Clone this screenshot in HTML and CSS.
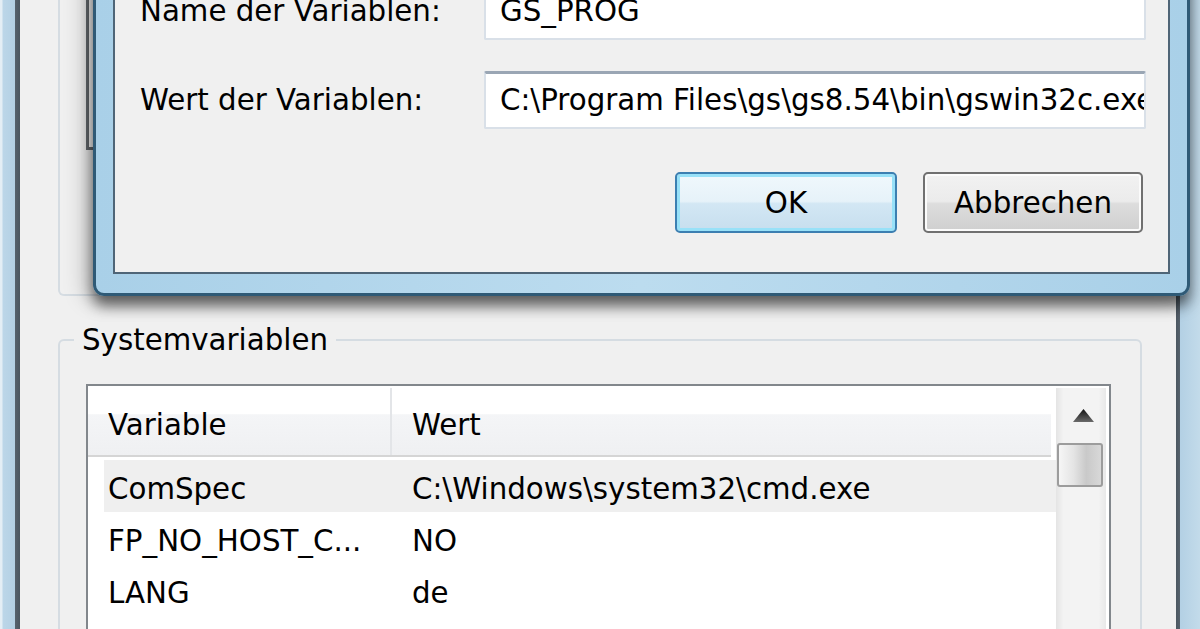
FILE: index.html
```html
<!DOCTYPE html>
<html lang="de">
<head>
<meta charset="utf-8">
<title>Umgebungsvariablen</title>
<link rel="stylesheet" href="styles.css">
</head>
<body>
<div class="parent">
  <div class="frame-left"></div>
  <div class="client">
    <div class="user-group">
      <div class="user-list"></div>
    </div>
    <fieldset class="sys-group">
      <legend>Systemvariablen</legend>
      <div class="listview">
        <div class="lv-main">
          <div class="lv-header">
            <div class="col col-name">Variable</div>
            <div class="col col-value">Wert</div>
          </div>
          <div class="lv-rows">
            <div class="row selected"><div class="cell c1">ComSpec</div><div class="cell c2">C:\Windows\system32\cmd.exe</div></div>
            <div class="row"><div class="cell c1">FP_NO_HOST_C...</div><div class="cell c2">NO</div></div>
            <div class="row"><div class="cell c1">LANG</div><div class="cell c2">de</div></div>
          </div>
        </div>
        <div class="scrollbar">
          <div class="sb-up">
            <svg width="21" height="13" viewBox="0 0 21 13"><defs><linearGradient id="ag" x1="0" y1="0" x2="0" y2="1"><stop offset="0" stop-color="#111"/><stop offset="1" stop-color="#6a6a6a"/></linearGradient></defs><polygon points="10.5,0 21,13 0,13" fill="url(#ag)"/></svg>
          </div>
          <div class="sb-thumb"></div>
        </div>
      </div>
    </fieldset>
  </div>
  <div class="frame-right"></div>
</div>

<div class="dialog">
  <div class="dlg-client">
    <div class="field-row">
      <label class="field-label">Name der Variablen:</label>
      <div class="textbox">GS_PROG</div>
    </div>
    <div class="field-row value-row">
      <label class="field-label">Wert der Variablen:</label>
      <div class="textbox">C:\Program Files\gs\gs8.54\bin\gswin32c.exe</div>
    </div>
    <div class="buttons">
      <button class="btn btn-default">OK</button>
      <button class="btn">Abbrechen</button>
    </div>
  </div>
</div>
</body>
</html>
```

FILE: styles.css
```css
* { box-sizing: border-box; }
html, body { margin: 0; padding: 0; }
body {
  width: 1200px;
  height: 629px;
  overflow: hidden;
  position: relative;
  background: #f0f0f0;
  font-family: "DejaVu Sans", sans-serif;
  font-size: 29.3px;
  color: #000;
}

/* parent window */
.parent { display: flex; height: 629px; overflow: hidden; }
.frame-left {
  width: 20px; flex: none;
  background: linear-gradient(to right, #e4eef5 0, #e4eef5 2px, #bcd6e8 3px, #b3d0e4 15px, #56626d 15px, #4b5761 20px);
}
.frame-right {
  width: 24px; flex: none;
  background: linear-gradient(to right, #4b5761 0, #56626d 4px, #b3d0e4 4px, #c3dbea 24px);
}
.client {
  flex: 1;
  display: flex;
  flex-direction: column;
  padding: 0 34px 0 38px;
  overflow: hidden;
}
.user-group {
  height: 296px; flex: none;
  border: 2px solid #d5dce2;
  border-top: none;
  border-radius: 0 0 6px 6px;
  padding-left: 26px;
}
.user-list {
  width: 200px; height: 150px;
  border-left: 3px solid #666b70;
  border-bottom: 3px solid #666b70;
  background: #fff;
}

.sys-group {
  flex: none;
  height: 420px;
  margin: 27px 0 0 0;
  padding: 0;
  border: 2px solid #d5dce2;
  border-radius: 6px;
  min-width: 0;
}
.sys-group legend {
  margin-left: 14px;
  padding: 0 8px;
  line-height: 34px;
}

.listview {
  display: flex;
  margin: 27px 29px 0 26px;
  height: 340px;
  border: 2px solid #82878c;
  background: #fff;
}
.lv-main { flex: 1; min-width: 0; padding-top: 2px; }
.lv-header {
  display: flex;
  height: 69px;
  margin-right: 5px;
  border-bottom: 2px solid #d5d5d5;
  background: linear-gradient(#fff 0, #fff 38%, #f4f5f7 40%, #eff0f2 100%);
}
.col { padding-top: 9px; line-height: 57px; white-space: nowrap; }
.col-name { width: 304px; padding-left: 20px; border-right: 2px solid #e3e5e8; }
.col-value { padding-left: 20px; }

.lv-rows { padding: 3px 0 0 16px; }
.row {
  display: flex;
  height: 52px;
  padding-top: 7px;
  line-height: 45px;
  white-space: nowrap;
}
.row.selected { background: #efefef; }
.c1 { width: 288px; padding-left: 4px; flex: none; }
.c2 { padding-left: 20px; }

.scrollbar {
  width: 50px; flex: none;
  margin: 2px 3px 0 0;
  background: linear-gradient(to right, #e4e4e4, #f3f3f3 15%, #f3f3f3 85%, #e8e8e8);
}
.sb-up {
  height: 55px;
  display: flex;
  justify-content: center;
  padding: 21px 0 0 4px;
}
.sb-up svg { display: block; }
.sb-thumb {
  margin-left: 1px;
  width: 46px; height: 44px;
  border: 2px solid #9c9c9c;
  border-radius: 3px;
  background: linear-gradient(to right, #f6f6f6, #e4e4e4 35%, #c9c9c9 65%, #d8d8d8);
}

/* dialog window */
.dialog {
  position: absolute;
  left: 93px; top: -100px;
  width: 1097px; height: 396px;
  padding: 17px 17px 19px 17px;
  border: 3px solid #2f5a76;
  border-radius: 0 0 11px 11px;
  background: linear-gradient(to right, #a9d0e8, #bcdcef 50%, #a9d0e8);
  box-shadow: 0 10px 14px rgba(0,0,0,.55), -8px 4px 22px rgba(0,0,0,.22);
}
.dlg-client {
  height: 100%;
  border: 2px solid #4f6577;
  background: #f0f0f0;
  display: flex;
  flex-direction: column;
  justify-content: flex-end;
  padding: 0 22px 39px 25px;
}
.field-row { display: flex; align-items: center; height: 58px; flex: none; }
.value-row { margin-top: 31px; }
.field-label { width: 344px; flex: none; white-space: nowrap; }
.textbox {
  flex: 1; min-width: 0;
  height: 58px;
  line-height: 53px;
  padding-left: 14px;
  background: #fff;
  border: 2px solid #d9e0e8;
  border-top: 3px solid #9aa6b4;
  border-radius: 2px;
  white-space: nowrap;
  overflow: hidden;
}
.buttons {
  display: flex;
  justify-content: flex-end;
  gap: 26px;
  margin-top: 43px;
  padding-right: 3px;
  flex: none;
}
.btn {
  font: inherit;
  color: #000;
  width: 220px; height: 61px;
  padding: 0;
  border: 2px solid #707070;
  border-radius: 5px;
  background: linear-gradient(#f2f2f2 0, #ebebeb 48%, #dddddd 52%, #cfcfcf 100%);
  box-shadow: inset 0 0 0 2px #fbfbfb;
}
.btn-default {
  width: 222px;
  border-color: #3c7fb1;
  box-shadow: inset 0 0 0 3px #98e1f8;
  background: linear-gradient(#f0f8fc 0, #e6f2f9 48%, #d3e7f4 52%, #c6deee 100%);
}
```
